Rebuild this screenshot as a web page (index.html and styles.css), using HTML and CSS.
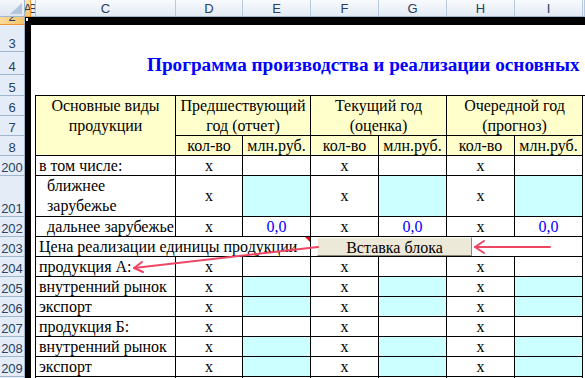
FILE: index.html
```html
<!DOCTYPE html>
<html lang="ru">
<head>
    <meta charset="UTF-8">
    <meta name="viewport" content="width=device-width, initial-scale=1.0">
    <title>Программа производства и реализации</title>
    <link rel="stylesheet" href="styles.css">
</head>
<body>
    <div class="window">
        <div class="col-heads">
            <div class="corner">
                <svg width="24" height="16" viewBox="0 0 24 16"><polygon points="10,14 22,14 22,3" fill="#b3c6dd"/></svg>
            </div>
            <div class="ch w-a sel">A</div>
            <div class="ch w-b">B</div>
            <div class="ch w-c">C</div>
            <div class="ch w-d">D</div>
            <div class="ch w-n">E</div>
            <div class="ch w-n">F</div>
            <div class="ch w-n">G</div>
            <div class="ch w-n">H</div>
            <div class="ch w-n">I</div>
            <div class="ch w-rest"></div>
        </div>

        <div class="main">
            <div class="row-heads">
                <div class="rh h-2 sel">2</div>
                <div class="rh h-3">3</div>
                <div class="rh h-4">4</div>
                <div class="rh h-5">5</div>
                <div class="rh">6</div>
                <div class="rh">7</div>
                <div class="rh">8</div>
                <div class="rh">200</div>
                <div class="rh h-tall">201</div>
                <div class="rh">202</div>
                <div class="rh">203</div>
                <div class="rh">204</div>
                <div class="rh">205</div>
                <div class="rh">206</div>
                <div class="rh">207</div>
                <div class="rh">208</div>
                <div class="rh">209</div>
                <div class="rh">210</div>
            </div>

            <div class="sheet">
                <div class="frame-top"></div>
                <div class="sheet-body">
                    <div class="frame-left"></div>
                    <div class="gap-b"></div>
                    <div class="content">
                        <div class="row3"></div>
                        <div class="row4">
                            <div class="title">Программа производства и реализации основных</div>
                        </div>
                        <div class="row5"></div>

                        <div class="grid">
                            <!-- шапка -->
                            <div class="c hd caption">Основные виды<br>продукции</div>
                            <div class="c hd year">Предшествующий<br>год (отчет)</div>
                            <div class="c hd year">Текущий год<br>(оценка)</div>
                            <div class="c hd year">Очередной год<br>(прогноз)</div>
                            <div class="c hd">кол-во</div>
                            <div class="c hd">млн.руб.</div>
                            <div class="c hd">кол-во</div>
                            <div class="c hd">млн.руб.</div>
                            <div class="c hd">кол-во</div>
                            <div class="c hd">млн.руб.</div>

                            <!-- 200 -->
                            <div class="c lt">в том числе:</div>
                            <div class="c">х</div><div class="c"></div>
                            <div class="c">х</div><div class="c"></div>
                            <div class="c">х</div><div class="c"></div>

                            <!-- 201 -->
                            <div class="c ind">ближнее<br>зарубежье</div>
                            <div class="c">х</div><div class="c cy"></div>
                            <div class="c">х</div><div class="c cy"></div>
                            <div class="c">х</div><div class="c cy"></div>

                            <!-- 202 -->
                            <div class="c ind">дальнее зарубежье</div>
                            <div class="c">х</div><div class="c num">0,0</div>
                            <div class="c">х</div><div class="c num">0,0</div>
                            <div class="c">х</div><div class="c num">0,0</div>

                            <!-- 203 -->
                            <div class="c lt price">Цена реализации единицы продукции</div>
                            <div class="c price-rest"></div>

                            <!-- 204 -->
                            <div class="c lt">продукция А:</div>
                            <div class="c">х</div><div class="c"></div>
                            <div class="c">х</div><div class="c"></div>
                            <div class="c">х</div><div class="c"></div>

                            <!-- 205 -->
                            <div class="c lt">внутренний рынок</div>
                            <div class="c">х</div><div class="c cy"></div>
                            <div class="c">х</div><div class="c cy"></div>
                            <div class="c">х</div><div class="c cy"></div>

                            <!-- 206 -->
                            <div class="c lt">экспорт</div>
                            <div class="c">х</div><div class="c cy"></div>
                            <div class="c">х</div><div class="c cy"></div>
                            <div class="c">х</div><div class="c cy"></div>

                            <!-- 207 -->
                            <div class="c lt">продукция Б:</div>
                            <div class="c">х</div><div class="c"></div>
                            <div class="c">х</div><div class="c"></div>
                            <div class="c">х</div><div class="c"></div>

                            <!-- 208 -->
                            <div class="c lt">внутренний рынок</div>
                            <div class="c">х</div><div class="c cy"></div>
                            <div class="c">х</div><div class="c cy"></div>
                            <div class="c">х</div><div class="c cy"></div>

                            <!-- 209 -->
                            <div class="c lt">экспорт</div>
                            <div class="c">х</div><div class="c cy"></div>
                            <div class="c">х</div><div class="c cy"></div>
                            <div class="c">х</div><div class="c cy"></div>

                            <!-- 210 -->
                            <div class="c"></div>
                            <div class="c"></div><div class="c"></div>
                            <div class="c"></div><div class="c"></div>
                            <div class="c"></div><div class="c"></div>
                        </div>
                    </div>
                </div>
            </div>
        </div>

        <!-- поверх листа -->
        <div class="active-cell"></div>
        <div class="comment-mark"></div>
        <div class="btn">Вставка блока</div>
        <svg class="arrows" width="585" height="378" viewBox="0 0 585 378">
            <g fill="none" stroke="#ef4563" stroke-width="2" stroke-linecap="round" stroke-linejoin="round">
                <line x1="318" y1="247" x2="134" y2="268"/>
                <polyline points="143,272 134,268 142,262"/>
                <line x1="550" y1="247" x2="475" y2="247"/>
                <polyline points="484,241 475,247 484,253"/>
            </g>
        </svg>
    </div>
</body>
</html>
```

FILE: styles.css
```css
body {
    margin: 0;
    background: #fff;
    font-family: 'Liberation Serif', 'Times New Roman', serif;
    font-size: 16px;
    color: #000;
    overflow: hidden;
}
.window {
    position: relative;
    width: 585px;
    height: 378px;
    overflow: hidden;
}

/* заголовки столбцов */
.col-heads {
    display: flex;
    height: 17px;
    font-family: 'Liberation Sans', Arial, sans-serif;
    font-size: 13px;
    color: #27415f;
}
.corner {
    flex: none;
    width: 25px;
    box-sizing: border-box;
    border-right: 1px solid #9eb6ce;
    border-bottom: 1px solid #9eb6ce;
    background: linear-gradient(#f4f7fb, #dde6f2);
}
.corner svg {
    display: block;
}
.ch {
    flex: none;
    box-sizing: border-box;
    display: flex;
    justify-content: center;
    padding-top: 1px;
    line-height: 15px;
    overflow: hidden;
    border-right: 1px solid #b7c9de;
    border-bottom: 1px solid #9eb6ce;
    background: linear-gradient(#f8fafd, #e3eaf4);
}
.ch.sel {
    background: linear-gradient(#fbe3b4, #f3c46a);
    border-right-color: #f29536;
    border-bottom-color: #f29536;
}
.w-a { width: 6px; }
.w-b { width: 5px; }
.w-c { width: 140px; }
.w-d { width: 67px; }
.w-n { width: 68px; }
.w-rest { flex: 1; }

.main {
    display: flex;
}

/* заголовки строк */
.row-heads {
    flex: none;
    width: 25px;
    font-family: 'Liberation Sans', Arial, sans-serif;
    font-size: 13px;
    color: #27415f;
}
.rh {
    box-sizing: border-box;
    height: 20px;
    display: flex;
    align-items: flex-end;
    justify-content: center;
    line-height: 15px;
    overflow: hidden;
    background: #e4ecf7;
    border-right: 1px solid #9eb6ce;
    border-bottom: 1px solid #9eb6ce;
}
.rh.sel {
    background: linear-gradient(to right, #f9d99b, #f3c46a);
    border-bottom-color: #f29536;
}
.h-2 { height: 8px; }
.h-3 { height: 27px; }
.h-4 { height: 23px; }
.h-5 { height: 21px; }
.h-tall { height: 41px; }

/* лист */
.sheet {
    flex: 1;
}
.frame-top {
    height: 8px;
    background: #000;
}
.sheet-body {
    display: flex;
}
.frame-left {
    flex: none;
    width: 6px;
    background: #000;
}
.gap-b {
    flex: none;
    width: 4px;
}
.content {
    flex: 1;
}
.row3 { height: 27px; }
.row4 { height: 23px; }
.row5 { height: 20px; }
.title {
    margin-left: 112px;
    padding-top: 3px;
    line-height: 20px;
    font-size: 19.2px;
    font-weight: bold;
    color: #0000ff;
    white-space: nowrap;
}

.grid {
    display: grid;
    grid-template-columns: 140px 67px repeat(5, 68px);
    grid-template-rows: repeat(4, 20px) 41px repeat(9, 20px);
    border-top: 1px solid #000;
    border-left: 1px solid #000;
}
.c {
    box-sizing: border-box;
    display: flex;
    align-items: center;
    justify-content: center;
    text-align: center;
    line-height: 20px;
    white-space: nowrap;
    border-right: 1px solid #000;
    border-bottom: 1px solid #000;
}
.hd {
    background: #ffffcc;
}
.caption {
    grid-row: span 3;
    align-items: flex-start;
}
.year {
    grid-column: span 2;
    grid-row: span 2;
}
.lt {
    justify-content: flex-start;
    text-align: left;
    padding-left: 3px;
}
.ind {
    justify-content: flex-start;
    text-align: left;
    padding-left: 11px;
}
.cy {
    background: #ccffff;
}
.num {
    color: #0000ff;
}
.price {
    grid-column: span 3;
}
.price-rest {
    grid-column: span 4;
}

/* элементы поверх листа */
.active-cell {
    position: absolute;
    left: 26px;
    top: 18px;
    width: 5px;
    height: 6px;
    box-sizing: border-box;
    background: #fff;
    border-right: 3px solid #000;
    border-bottom: 3px solid #000;
}
.comment-mark {
    position: absolute;
    left: 305px;
    top: 237px;
    width: 0;
    height: 0;
    border-top: 5px solid #ff0000;
    border-left: 5px solid transparent;
}
.btn {
    position: absolute;
    left: 317px;
    top: 237px;
    width: 155px;
    height: 19px;
    box-sizing: border-box;
    padding-top: 2px;
    line-height: 16px;
    text-align: center;
    background: #ece9d8;
    border: 1px solid;
    border-color: #fbfaf5 #8d8b80 #8d8b80 #fbfaf5;
}
.arrows {
    position: absolute;
    left: 0;
    top: 0;
    pointer-events: none;
}
```
